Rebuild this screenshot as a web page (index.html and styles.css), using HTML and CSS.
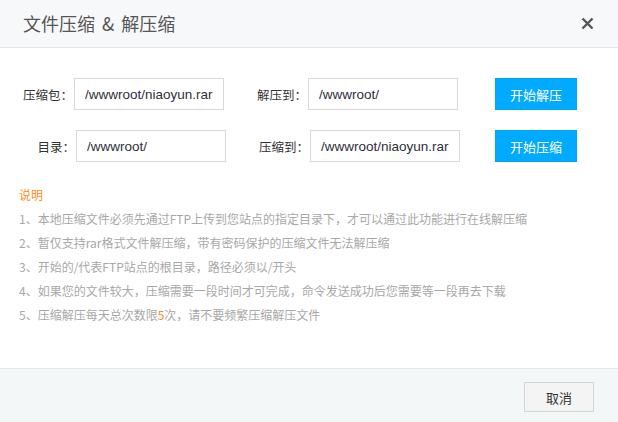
FILE: index.html
```html
<!DOCTYPE html>
<html lang="zh-CN">
<head>
<meta charset="utf-8">
<title>文件压缩 &amp; 解压缩</title>
<link rel="stylesheet" href="styles.css">
</head>
<body>
<div class="dialog">
  <div class="header">
    <h3 class="title">文件压缩 &amp; 解压缩</h3>
    <button class="close" type="button" aria-label="关闭">
      <svg width="13" height="13" viewBox="0 0 13 13"><path d="M1.5 1.5 L11.5 11.5 M11.5 1.5 L1.5 11.5" stroke="#555" stroke-width="2.4" fill="none"/></svg>
    </button>
  </div>
  <div class="body">
    <div class="row">
      <label class="lbl lbl-first">压缩包：</label>
      <input class="field" type="text" value="/wwwroot/niaoyun.rar">
      <label class="lbl lbl-second">解压到：</label>
      <input class="field" type="text" value="/wwwroot/">
      <button class="btn-primary" type="button">开始解压</button>
    </div>
    <div class="row row-b">
      <label class="lbl lbl-first">目录：</label>
      <input class="field" type="text" value="/wwwroot/">
      <label class="lbl lbl-second">压缩到：</label>
      <input class="field" type="text" value="/wwwroot/niaoyun.rar">
      <button class="btn-primary" type="button">开始压缩</button>
    </div>
    <div class="notes">
      <p class="notes-title">说明</p>
      <p>1、本地压缩文件必须先通过FTP上传到您站点的指定目录下，才可以通过此功能进行在线解压缩</p>
      <p>2、暂仅支持rar格式文件解压缩，带有密码保护的压缩文件无法解压缩</p>
      <p>3、开始的/代表FTP站点的根目录，路径必须以/开头</p>
      <p>4、如果您的文件较大，压缩需要一段时间才可完成，命令发送成功后您需要等一段再去下载</p>
      <p>5、压缩解压每天总次数限<span class="hl">5</span>次，请不要频繁压缩解压文件</p>
    </div>
  </div>
  <div class="footer">
    <button class="btn-cancel" type="button">取消</button>
  </div>
</div>
</body>
</html>
```
FILE: styles.css
```css
* { box-sizing: border-box; }
html, body { margin: 0; padding: 0; background: #fff; }
body {
  font-family: "Noto Sans CJK SC", "Noto Sans", sans-serif;
  color: #333;
  width: 618px;
  height: 422px;
  overflow: hidden;
}
.dialog { display: flex; flex-direction: column; height: 422px; }
.header {
  height: 48px;
  background: #f7f8fa;
  border-bottom: 1px solid #e6e8eb;
  display: flex;
  align-items: center;
  justify-content: space-between;
  padding: 0 24px 0 23px;
}
.title {
  margin: 0;
  font-weight: normal;
  font-size: 18px;
  line-height: 24px;
  word-spacing: 3px;
  color: #555;
  margin-top: -1px;
}
.close {
  border: 0;
  background: none;
  padding: 0;
  width: 13px;
  height: 13px;
  display: flex;
  margin-top: -1px;
}
.body { flex: 1; padding-top: 30px; }
.row {
  display: flex;
  align-items: center;
  height: 32px;
  padding-right: 41px;
  margin-bottom: 20px;
}
.row-b { margin-bottom: 21px; }
.lbl {
  font-size: 12.5px;
  color: #333;
  text-align: right;
  flex: none;
  padding-right: 1px;
}
.lbl-first { width: 74px; }
.row-b .lbl-first { width: 76px; }
.lbl-second { width: 84px; }
.field {
  width: 150px;
  height: 32px;
  border: 1px solid #d9d9d9;
  padding: 0 10px;
  font-family: "Liberation Sans", Arial, sans-serif;
  font-size: 13.5px;
  color: #2f2f3a;
  background: #fff;
  outline: none;
  flex: none;
}
.btn-primary {
  margin-left: auto;
  width: 82px;
  height: 32px;
  border: 1px solid #00a3f5;
  background: #00aaff;
  color: #fff;
  font-family: inherit;
  font-size: 13px;
  padding: 0;
}
.notes { padding-left: 19px; }
.notes p {
  margin: 0;
  font-size: 12px;
  line-height: 24px;
  color: #a8a8a8;
}
.notes .notes-title { color: #ff8a1c; }
.hl { color: #ff8a1c; }
.footer {
  height: 54px;
  border-top: 1px solid #e6e8eb;
  background: #f4f7f8;
  display: flex;
  justify-content: flex-end;
  align-items: flex-start;
  padding: 13px 24px 0 0;
}
.btn-cancel {
  width: 70px;
  height: 30px;
  border: 1px solid #d5d5d5;
  background: #f4f4f4;
  font-family: inherit;
  font-size: 13px;
  color: #333;
  padding: 0;
}
```
